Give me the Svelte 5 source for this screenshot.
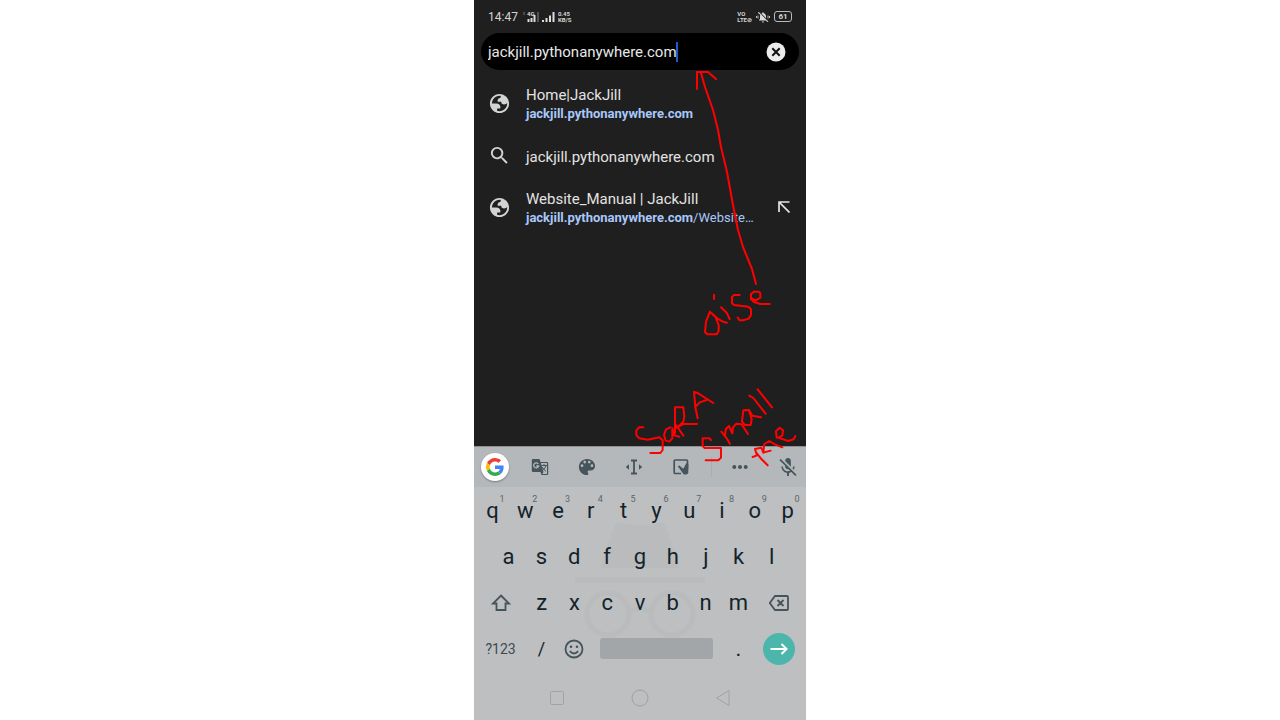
<script>
  let query = $state('jackjill.pythonanywhere.com');

  const globe =
    'M12 2C6.486 2 2 6.486 2 12s4.486 10 10 10 10-4.486 10-10S17.514 2 12 2zM4 12h4.4c3.407.022 4.922 1.73 4.543 5.127H9.488v2.47a8.004 8.004 0 0 0 10.498-8.083C19.327 12.504 18.332 13 17 13c-2.137 0-3.206-.916-3.206-2.75h-3.748c-.274-2.728.683-4.092 2.87-4.092 0-.975.327-1.597.811-1.97A8 8 0 0 0 4 12z';
  const search =
    'M15.5 14h-.79l-.28-.27A6.47 6.47 0 0 0 16 9.5 6.5 6.5 0 1 0 9.5 16c1.61 0 3.09-.59 4.23-1.57l.27.28v.79l5 4.99L20.49 19l-4.99-5zm-6 0C7.01 14 5 11.99 5 9.5S7.01 5 9.5 5 14 7.01 14 9.5 11.99 14 9.5 14z';

  const suggestions = [
    { icon: globe, title: 'Home|JackJill', host: 'jackjill.pythonanywhere.com', path: '' },
    { icon: search, title: 'jackjill.pythonanywhere.com' },
    { icon: globe, title: 'Website_Manual | JackJill', host: 'jackjill.pythonanywhere.com', path: '/Website…', fill: true }
  ];

  const row1 = [...'qwertyuiop'].map((k, i) => ({ k, hint: (i + 1) % 10 }));
  const row2 = [...'asdfghjkl'];
  const row3 = [...'zxcvbnm'];
</script>

<main class="phone">
  <header class="status">
    <time>14:47</time>
    <svg class="signal" viewBox="0 0 32 12" aria-hidden="true">
      <path d="M1 1v3" stroke="#777" />
      <text x="4" y="5">4G</text>
      <path d="M5.5 11V8M8.5 11V7M11.5 11V4" stroke="#ddd" stroke-width="2" />
      <path d="M15 11V1" stroke="#666" stroke-width="1.5" />
      <path d="M20 11V9M23.500 11V7M27 11V4.500M30.500 11V1" stroke="#ddd" stroke-width="2" />
    </svg>
    <span class="tiny">0.45<br />KB/S</span>
    <span class="tiny volte">VO<br />LTE⊘</span>
    <svg class="bell" viewBox="0 0 28 24" aria-hidden="true">
      <path fill="#ddd" d="M22 18.690L9.840 6.140 7.270 3.490 5 2l-1 2 4.800 3.560C8.280 8.560 8 9.730 8 10.990v5l-2 2v1h13.730l3 3L25 20.700zM14 23c1.110 0 2-.89 2-2h-4c0 1.110.89 2 2 2zm6-8.320V11c0-3.080-1.640-5.640-4.500-6.320V4c0-.83-.67-1.500-1.500-1.500s-1.500.67-1.500 1.500v.68c-.5.100-1 .300-1.440.560L20 14.680z" />
      <path fill="none" stroke="#ccc" stroke-width="1.800" d="M4 9v6M1 10v4M24 9v6M27 10v4" />
    </svg>
    <span class="battery">61</span>
  </header>

  <form class="omnibox" onsubmit={(e) => e.preventDefault()}>
    <input aria-label="Address" bind:value={query} />
    <span class="caret"></span>
    <button type="button" class="clear" aria-label="Clear" onclick={() => (query = '')}>
      <svg viewBox="0 0 20 20"><circle cx="10" cy="10" r="9.500" fill="#ececec" /><path d="M6.300 6.300l7.400 7.400M13.700 6.300l-7.400 7.400" stroke="#111" stroke-width="2" /></svg>
    </button>
  </form>

  <ul class="suggestions">
    {#each suggestions as s}
      <li>
        <svg class="lead" viewBox="0 0 24 24" aria-hidden="true"><path fill-rule="evenodd" d={s.icon} /></svg>
        <a href="#open">
          <span class="title">{s.title}</span>
          {#if s.host}<span class="url"><b>{s.host}</b>{s.path}</span>{/if}
        </a>
        {#if s.fill}
          <button class="refine" aria-label="Refine">
            <svg viewBox="0 0 12 12"><path d="M1 11V1h10.500M1 1l10.500 10.500" fill="none" stroke="#e4e4e4" stroke-width="1.700" /></svg>
          </button>
        {/if}
      </li>
    {/each}
  </ul>

  <section class="keyboard">
    <div class="tools">
      <button class="google" aria-label="Google">
        <svg viewBox="0 0 48 48">
          <path fill="#ea4335" d="M24 9.500c3.540 0 6.710 1.220 9.210 3.600l6.850-6.850C35.900 2.380 30.470 0 24 0 14.620 0 6.510 5.380 2.560 13.220l7.980 6.190C12.430 13.720 17.740 9.500 24 9.500z" />
          <path fill="#4285f4" d="M46.980 24.550c0-1.570-.15-3.090-.38-4.550H24v9.020h12.940c-.58 2.960-2.260 5.480-4.780 7.180l7.730 6c4.510-4.180 7.090-10.360 7.090-17.650z" />
          <path fill="#fbbc05" d="M10.530 28.590c-.48-1.450-.76-2.990-.76-4.590s.27-3.140.76-4.590l-7.980-6.190C.92 16.460 0 20.120 0 24s.92 7.540 2.560 10.780z" />
          <path fill="#34a853" d="M24 48c6.480 0 11.930-2.130 15.890-5.810l-7.730-6c-2.150 1.450-4.920 2.300-8.160 2.300-6.260 0-11.570-4.220-13.470-9.910l-7.980 6.190C6.510 42.620 14.620 48 24 48z" />
        </svg>
      </button>
      <button aria-label="Translate">
        <svg viewBox="0 0 18 18">
          <path d="M2 1h6.500l1 3H16a1.200 1.200 0 0 1 1.200 1.200v10.600A1.200 1.200 0 0 1 16 17h-5.500l-1-3H2A1.200 1.200 0 0 1 .8 12.800V2.200A1.200 1.200 0 0 1 2 1z" />
          <path fill="#b4b8ba" d="M9.900 5H16v11h-4.700l1.200-2z" />
          <path fill="none" stroke="#b4b8ba" stroke-width="1.300" d="M7.300 6A2.500 2.500 0 1 0 7.600 8H5.300" />
          <path fill="none" stroke="#46545b" d="M10.500 7.500H16M13 6v1.500M14.800 7.500c-.3 2-1.500 3.600-3.100 4.700M11.200 9c.9 1.800 2.200 3 3.700 4.200" />
        </svg>
      </button>
      <button aria-label="Theme">
        <svg viewBox="2 2 20 20"><path d="M12 3c-4.970 0-9 4.030-9 9s4.030 9 9 9c.83 0 1.500-.67 1.500-1.500 0-.39-.15-.74-.39-1.010-.23-.26-.38-.61-.38-.99 0-.83.67-1.500 1.500-1.500H16c2.760 0 5-2.240 5-5 0-4.420-4.030-8-9-8zm-5.500 9c-.83 0-1.500-.67-1.500-1.500S5.670 9 6.500 9 8 9.670 8 10.500 7.330 12 6.500 12zm3-4C8.670 8 8 7.330 8 6.500S8.670 5 9.500 5s1.500.67 1.500 1.500S10.330 8 9.500 8zm5 0c-.83 0-1.500-.67-1.500-1.500S13.670 5 14.500 5s1.500.67 1.500 1.500S15.330 8 14.500 8zm3 4c-.83 0-1.500-.67-1.500-1.500S16.670 9 17.500 9s1.500.67 1.500 1.500-.67 1.500-1.500 1.500z" /></svg>
      </button>
      <button aria-label="Text editing">
        <svg viewBox="0 0 18 18"><path fill="none" stroke="#46545b" stroke-width="1.800" d="M6 2.500h6M6 15.500h6M9 2.500v13" /><path d="M4 6.200v5.600L.8 9zM14 6.200v5.600L17.200 9z" /></svg>
      </button>
      <button aria-label="Handwriting">
        <svg viewBox="0 0 18 18"><path fill="none" stroke="#46545b" stroke-width="1.700" d="M9 15.500H3.200a1 1 0 0 1-1-1V3a1 1 0 0 1 1-1H14.500a1 1 0 0 1 1 1v8" /><path d="M5.800 8.200l1.500-.8 4 3.400 3-5.600 2 .8v9l-1.500 1.500h-3z" /></svg>
      </button>
      <span class="divider"></span>
      <button aria-label="More">
        <svg viewBox="0 0 18 18"><circle cx="3.300" cy="9" r="2" /><circle cx="9" cy="9" r="2" /><circle cx="14.700" cy="9" r="2" /></svg>
      </button>
      <button class="mic" aria-label="Voice input off">
        <svg viewBox="3 2 18 19"><path d="M19 11h-1.700c0 .74-.16 1.430-.43 2.050l1.230 1.230c.56-.98.9-2.090.9-3.280zm-4.020.17c0-.06.02-.11.02-.17V5c0-1.660-1.340-3-3-3S9 3.340 9 5v.18l5.980 5.990zM4.270 3L3 4.270l6.010 6.010V11c0 1.660 1.330 3 2.990 3 .22 0 .44-.03.65-.08l1.660 1.660c-.71.33-1.500.52-2.310.52-2.760 0-5.300-2.100-5.300-5.100H5c0 3.410 2.720 6.230 6 6.720V21h2v-3.280c.91-.13 1.770-.45 2.540-.9L19.730 21 21 19.730 4.270 3z" /></svg>
      </button>
    </div>

    <div class="keys">
      <svg class="incognito" viewBox="0 0 130 116" aria-hidden="true">
        <path fill="#b9bbbd" d="M26 46 39 5q2-5 8-4l18 3 18-3q6-1 8 4l13 41zM0 55h130v6H0z" />
        <g fill="none" stroke="#b9bbbd" stroke-width="5"><circle cx="33" cy="92" r="21" /><circle cx="97" cy="92" r="21" /><path d="M54 90q11-7 22 0" /></g>
      </svg>
      <div class="row">
        {#each row1 as { k, hint }}<button>{k}<sup>{hint}</sup></button>{/each}
      </div>
      <div class="row inset">
        {#each row2 as k}<button>{k}</button>{/each}
      </div>
      <div class="row">
        <button class="wide" aria-label="Shift">
          <svg viewBox="0 0 20 20"><path d="M10 2.500 18 10.500h-3.500V17h-9v-6.500H2z" /></svg>
        </button>
        {#each row3 as k}<button>{k}</button>{/each}
        <button class="wide" aria-label="Backspace">
          <svg viewBox="0 0 20 20"><path d="M6 3h12a1 1 0 0 1 1 1v12a1 1 0 0 1-1 1H6L.8 10zM8.500 7l6 6M14.500 7l-6 6" /></svg>
        </button>
      </div>
      <div class="row">
        <button class="wide mode">?123</button>
        <button class="slash">/</button>
        <button aria-label="Emoji">
          <svg viewBox="0 0 20 20"><circle cx="10" cy="10" r="8.500" /><path d="M5.800 12.200q4.200 4.600 8.400 0" /><g fill="#46545b" stroke="none"><circle cx="7" cy="7.800" r="1.300" /><circle cx="13" cy="7.800" r="1.300" /></g></svg>
        </button>
        <button class="space" aria-label="Space"></button>
        <button>.</button>
        <button class="wide" aria-label="Go">
          <span class="go"><svg viewBox="0 0 20 20"><path d="M1.500 10h16M12.500 5l5 5-5 5" /></svg></span>
        </button>
      </div>
    </div>

    <nav>
      <button aria-label="Recent apps"><svg viewBox="0 0 18 18"><rect x="2.500" y="2.500" width="13" height="13" rx="1" /></svg></button>
      <button aria-label="Home"><svg viewBox="0 0 18 18"><circle cx="9" cy="9" r="8" /></svg></button>
      <button aria-label="Back"><svg viewBox="0 0 18 18"><path d="M15 1.500v15L2.500 9z" /></svg></button>
    </nav>
  </section>

  <svg class="ink" viewBox="0 0 332 720" role="img" aria-label="aise, SaRA small me">
    <path d="M223 89V72H234L242 79M227 73 231 87 239 110 244 130 247 147 253 172 259 205 264 230 269 247 278 269 282 284" />
    <g transform="translate(206 230) scale(.3333)">
      <path d="M90 245 78 275 75 307 82 313H110L116 303V285L107 262 94 249 114 267 129 275 141 278" />
      <path d="M123 232 140 248 149 267M102 194V207" />
      <path d="M179 195H162L156 201V220L162 225 205 230 213 238V255L206 266 190 271H179L173 263" />
      <path d="M215 205 228 211 241 203V190L236 185H222L213 192V207L222 216 241 222H269" />
    </g>
    <g transform="translate(146 370) scale(.3333)">
      <path d="M70 172H57L49 181V195L58 205 83 209 118 202 128 211V240L121 249H91" />
      <path d="M151 172 138 178 132 195 137 212 148 215 157 205V175L163 196 178 200" />
      <path d="M165 190V112H190L193 140 190 155 174 170M168 165 190 197M165 175 190 162H231" />
      <path d="M233 145 226 112 222 66 231 68 280 99M228 108 240 97 262 89" />
      <path d="M273 210 268 205H248V228L254 234H303V263L295 271H257" />
      <path d="M304 185 320 205 330 222M315 199 317 178 327 168 337 190 339 172 349 161 365 163 384 192" />
      <path d="M370 121 366 155 375 165 392 165 395 148 387 120 370 121M387 120 397 137 423 142M388 77 400 84 437 131M413 58 456 112" />
      <path d="M398 261 411 256 405 237 424 233 430 248 452 242M408 247 425 268 443 286M430 248 433 222 448 213 466 224 487 232" />
      <path d="M470 203 468 184 479 173 489 181 487 197 474 203 505 213 521 208 526 198" />
    </g>
  </svg>
</main>

<style>
  :global(body) { margin: 0; background: #fff; }
  .phone {
    position: relative;
    display: flex;
    flex-direction: column;
    max-width: 332px;
    min-height: 100vh;
    margin: 0 auto;
    background: #1f1f1f;
    color: #e3e3e3;
    font-family: Roboto, sans-serif;
  }
  button { padding: 0; border: 0; background: none; color: inherit; font: inherit; display: grid; place-items: center; min-width: 0; }

  .status { display: flex; align-items: center; height: 33px; padding: 0 14px; font-size: 12px; color: #d4d4d4; }
  .signal { width: 32px; height: 12px; margin: 0 3px 0 5px; }
  .signal text { font: bold 6px Roboto, sans-serif; fill: #ddd; }
  .tiny { font-size: 6px; line-height: 6px; font-weight: 700; }
  .volte { margin-left: auto; }
  .bell { width: 14px; height: 12px; margin: 0 4px; }
  .battery { border: 1px solid #bbb; border-radius: 3px; width: 16px; font-size: 8px; line-height: 9px; font-weight: 700; text-align: center; }

  .omnibox { display: flex; align-items: center; height: 37px; margin: 0 7px; padding: 0 13px 0 7px; border-radius: 19px; background: #000; }
  .omnibox input { field-sizing: content; min-width: 0; padding: 0; border: 0; outline: 0; background: none; color: #e8e8e8; font: 15px Roboto, sans-serif; }
  .caret { width: 2px; height: 20px; margin-left: -1px; background: #1f5bd0; }
  .clear { margin-left: auto; }
  .clear svg { width: 20px; height: 20px; display: block; }

  .suggestions { flex: 1; list-style: none; margin: 0; padding: 7px 16px 0 14px; }
  .suggestions li { display: flex; align-items: center; height: 52px; }
  .lead { flex: none; width: 23px; height: 23px; margin-right: 15px; fill: #d2d4d4; }
  .suggestions a { min-width: 0; padding-top: 3px; color: inherit; text-decoration: none; }
  .title, .url { display: block; white-space: nowrap; }
  .title { font-size: 15px; line-height: 18px; }
  .url { font-size: 13px; line-height: 19px; color: #a8c7fa; }
  .url b { font-weight: 700; }
  .refine { margin-left: auto; }
  .refine svg { width: 12px; height: 12px; }

  .keyboard { background: #bdbfc1; color: #13232b; border-top: 1px solid #8d9092; }
  .tools { display: grid; grid-template-columns: 42px repeat(4, 47px) 14px 1fr 1fr; align-items: center; height: 40px; background: #b4b8ba; }
  .tools svg { width: 18px; height: 18px; fill: #46545b; }
  .google { justify-self: center; width: 28px; height: 28px; border-radius: 50%; background: #fff; box-shadow: 0 1px 2px #0005; }
  .divider { justify-self: center; width: 1px; height: 20px; background: #a9adaf; }
  .mic { justify-self: end; padding-right: 9px; }

  .keys { position: relative; display: grid; grid-template-rows: repeat(4, 1fr); height: 185px; padding: 0 2px; }
  .incognito { position: absolute; left: 50%; top: 35px; width: 130px; transform: translateX(-50%); }
  .row { position: relative; display: grid; grid-template-columns: repeat(20, 1fr); }
  .row.inset { grid-template-columns: repeat(18, 1fr); padding: 0 16px; }
  .row button { position: relative; grid-column: span 2; font-size: 22px; }
  .row .wide { grid-column: span 3; }
  .row svg { width: 20px; height: 20px; fill: none; stroke: #46545b; stroke-width: 1.8; }
  sup { position: absolute; left: 50%; top: 6px; margin-left: 7px; font-size: 9px; line-height: 12px; color: #5c666b; }
  .row .mode { font-size: 14px; color: #3c4a51; }
  .row .slash { font-size: 18px; }
  .row .space { grid-column: span 8; height: 21px; margin: 0 9px; align-self: center; border-radius: 3px; background: #a2a6a9; }
  .row .go { display: grid; place-items: center; width: 32px; height: 32px; border-radius: 50%; background: #4db6ac; }
  .row .go svg { stroke: #fff; stroke-width: 2; }

  nav { display: flex; justify-content: center; gap: 65px; height: 45px; padding-top: 3px; }
  nav svg { width: 18px; height: 18px; fill: none; stroke: #a0a3a5; stroke-linejoin: round; }

  .ink { position: absolute; left: 0; top: 0; width: 100%; pointer-events: none; }
  .ink path { fill: none; stroke: #f00; stroke-width: 2px; stroke-linecap: round; stroke-linejoin: round; vector-effect: non-scaling-stroke; }
</style>
